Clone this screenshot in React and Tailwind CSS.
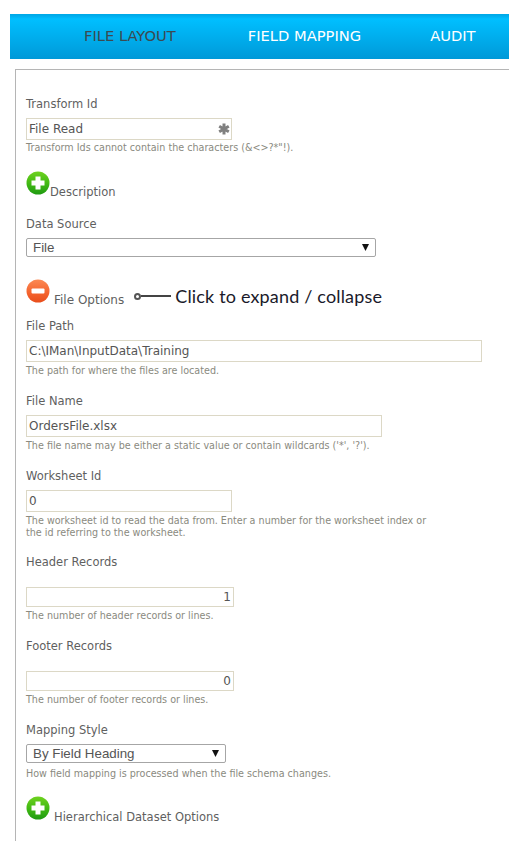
import React from 'react';

const font = "font-['DejaVu_Sans',sans-serif]";

const PlusIcon = ({ id }) => (
  <svg width="24" height="24" viewBox="0 0 24 24" className="shrink-0">
    <defs>
      <linearGradient id={id} x1="0" y1="0" x2="0" y2="1">
        <stop offset="0" stopColor="#6fd21f" />
        <stop offset="0.55" stopColor="#3fb813" />
        <stop offset="1" stopColor="#1f9a12" />
      </linearGradient>
    </defs>
    <circle cx="12" cy="12" r="11.5" fill={`url(#${id})`} />
    <path d="M9.5 5.5h5v4h4v5h-4v4h-5v-4h-4v-5h4z" fill="#fff" />
  </svg>
);

const MinusIcon = () => (
  <svg width="24" height="24" viewBox="0 0 24 24" className="shrink-0">
    <defs>
      <linearGradient id="minusBg" x1="0" y1="0" x2="0" y2="1">
        <stop offset="0" stopColor="#fb8a55" />
        <stop offset="0.6" stopColor="#f4622c" />
        <stop offset="1" stopColor="#e84e1c" />
      </linearGradient>
    </defs>
    <circle cx="12" cy="12" r="11.5" fill="url(#minusBg)" />
    <rect x="5.5" y="9.5" width="13" height="5" rx="1" fill="#fff" />
  </svg>
);

const Label = ({ children, className = '' }) => (
  <div className={`text-[11.5px] leading-[14px] text-[#5f5f5f] ${className}`}>{children}</div>
);

const Hint = ({ children, className = '' }) => (
  <div className={`text-[9.6px] leading-[12px] text-[#8a8a80] ${className}`}>{children}</div>
);

const Input = ({ value, width, right, height = 'h-[22px]' }) => (
  <div className={`flex items-center border border-[#dcd8c6] bg-white px-[2px] text-xs text-[#555] ${height} ${width} ${right ? 'justify-end' : ''}`}>
    {value}
  </div>
);

const Select = ({ value, width }) => (
  <div className={`flex h-[19px] items-center justify-between rounded-[2px] border border-[#a6a6a6] bg-white pl-[6px] pr-[6px] font-['Liberation_Sans',sans-serif] text-[13.33px] text-[#555] ${width}`}>
    <span>{value}</span>
    <svg width="7" height="7" viewBox="0 0 7 7"><path d="M0 0h7L3.5 7z" fill="#111" /></svg>
  </div>
);

export default function App() {
  return (
    <div className={`h-[851px] w-[519px] overflow-hidden bg-white pl-[10px] pr-[10px] pt-[14px] ${font}`}>
      <div className="flex h-[45px] items-center bg-[linear-gradient(to_bottom,#00a8e6_0px,#00aeee_2px,#00bfff_5px,#0099d8_100%)] pl-[74px] text-[14.7px]">
        <span className="text-[#3c4a50]">FILE LAYOUT</span>
        <span className="ml-[72px] text-white">FIELD MAPPING</span>
        <span className="ml-[69px] text-white">AUDIT</span>
      </div>

      <div className="ml-[5px] mt-[10px] h-[772px] border-l border-t border-[#b5b5b5] pl-[10px] pt-[27px]">
        <Label>Transform Id</Label>
        <div className="relative mt-[7px] w-[206px]">
          <Input value="File Read" width="w-[206px]" />
          <svg width="12" height="12" viewBox="0 0 12 12" className="absolute right-[2px] top-[5px]">
            <path d="M6 0.5v11M1.2 3.2l9.6 5.6M10.8 3.2l-9.6 5.6" stroke="#808080" strokeWidth="3" />
          </svg>
        </div>
        <Hint className="mt-[2px]">Transform Ids cannot contain the characters (&amp;&lt;&gt;?*"!).</Hint>

        <div className="mt-[17px] flex items-end">
          <PlusIcon id="plusA" />
          <Label className="mb-[-4px]">Description</Label>
        </div>

        <Label className="mt-[22px]">Data Source</Label>
        <div className="mt-[7px]"><Select value="File" width="w-[350px]" /></div>

        <div className="mt-[22px] flex items-end">
          <MinusIcon />
          <Label className="mb-[-4px] ml-[4px] !text-xs">File Options</Label>
          <div className="mb-[-2px] ml-[10px] flex items-center">
            <span className="h-[7px] w-[7px] rounded-full border-2 border-[#555]" />
            <span className="h-[2px] w-[30px] bg-[#444]" />
            <span className="ml-[4px] font-['Lato',sans-serif] text-[18px] leading-[18px] tracking-[0.17px] text-[#1a1a2a]">Click to expand / collapse</span>
          </div>
        </div>

        <Label className="mt-[16px]">File Path</Label>
        <div className="mt-[7px]"><Input value="C:\IMan\InputData\Training" width="w-[456px]" /></div>
        <Hint className="mt-[3px]">The path for where the files are located.</Hint>

        <Label className="mt-[17px]">File Name</Label>
        <div className="mt-[7px]"><Input value="OrdersFile.xlsx" width="w-[356px]" /></div>
        <Hint className="mt-[3px]">The file name may be either a static value or contain wildcards ('*', '?').</Hint>

        <Label className="mt-[17px]">Worksheet Id</Label>
        <div className="mt-[7px]"><Input value="0" width="w-[206px]" /></div>
        <Hint className="mt-[3px] w-[410px]">The worksheet id to read the data from. Enter a number for the worksheet index or the id referring to the worksheet.</Hint>

        <Label className="mt-[16px]">Header Records</Label>
        <div className="mt-[18px]"><Input value="1" width="w-[208px]" right height="h-[20px]" /></div>
        <Hint className="mt-[3px]">The number of header records or lines.</Hint>

        <Label className="mt-[17px]">Footer Records</Label>
        <div className="mt-[18px]"><Input value="0" width="w-[208px]" right height="h-[20px]" /></div>
        <Hint className="mt-[3px]">The number of footer records or lines.</Hint>

        <Label className="mt-[17px]">Mapping Style</Label>
        <div className="mt-[7px]"><Select value="By Field Heading" width="w-[200px]" /></div>
        <Hint className="mt-[5px]">How field mapping is processed when the file schema changes.</Hint>

        <div className="mt-[16px] flex items-end">
          <PlusIcon id="plusB" />
          <Label className="mb-[-4px] ml-[4px]">Hierarchical Dataset Options</Label>
        </div>
      </div>
    </div>
  );
}
